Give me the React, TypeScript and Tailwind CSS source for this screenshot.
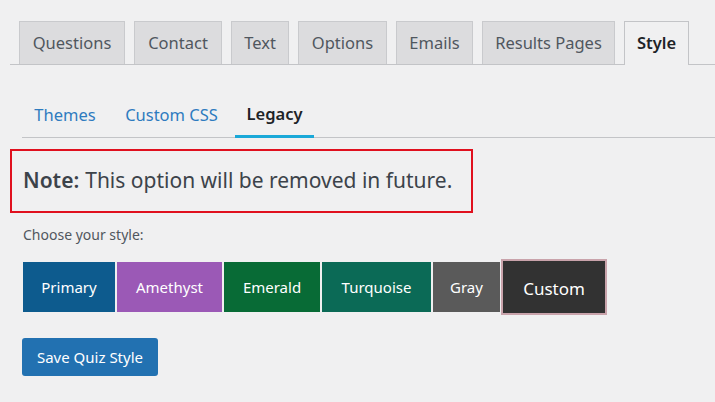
const tabs = [
  { label: 'Questions', w: 'w-[106px]' },
  { label: 'Contact', w: 'w-[88px]' },
  { label: 'Text', w: 'w-[58px]' },
  { label: 'Options', w: 'w-[89px]' },
  { label: 'Emails', w: 'w-[77px]' },
  { label: 'Results Pages', w: 'w-[133px]' },
]

const styles = [
  { label: 'Primary', cls: 'w-[92px] bg-[#0d5b8e]' },
  { label: 'Amethyst', cls: 'w-[105px] bg-[#9b59b6]' },
  { label: 'Emerald', cls: 'w-[96px] bg-[#086b36]' },
  { label: 'Turquoise', cls: 'w-[109px] bg-[#0b6a56]' },
  { label: 'Gray', cls: 'w-[67px] bg-[#5a5a5a]' },
]

export default function App() {
  return (
    <div
      className="w-[715px] h-[402px] overflow-hidden bg-[#f0f0f1] text-[#50575e]"
      style={{ fontFamily: '"Noto Sans", "Open Sans", sans-serif' }}
    >
      {/* main tabs */}
      <div className="ml-[10px] pt-[21px] pl-[9px] flex gap-[9px] border-b border-[#c3c4c7] h-[65px]">
        {tabs.map((t) => (
          <div
            key={t.label}
            className={`${t.w} h-[43px] flex items-center justify-center bg-[#dcdcde] border border-[#c9cacd] border-b-0 text-[16.5px] text-[#50575e]`}
          >
            {t.label}
          </div>
        ))}
        <div className="w-[65px] h-[44px] -mb-px flex items-center justify-center bg-[#f0f0f1] border border-[#c3c4c7] border-b-0 text-[16.5px] font-semibold text-[#1d2327]">
          Style
        </div>
      </div>

      {/* sub tabs */}
      <div className="ml-[22px] mt-[28px] flex gap-[4px] border-b border-[#c3c4c7] h-[45px]">
        <div className="w-[86px] flex items-center justify-center text-[16.5px] text-[#2e7bbf]">Themes</div>
        <div className="w-[119px] flex items-center justify-center text-[16.5px] text-[#2e7bbf]">Custom CSS</div>
        <div className="w-[79px] flex items-center justify-center text-[16.5px] font-semibold text-[#1d2327] border-b-[3px] border-[#1aa8d8] -mb-px">
          Legacy
        </div>
      </div>

      {/* note */}
      <div className="ml-[10px] mt-[11px] w-[463px] h-[64px] border-2 border-[#e0101e] flex items-center pl-[11px] text-[21px] text-[#3c434a]">
        <span className="font-semibold mr-[6px]">Note:</span>
        <span>This option will be removed in future.</span>
      </div>

      <div className="ml-[23px] mt-[11px] text-[14px] text-[#50575e]">Choose your style:</div>

      <div className="ml-[23px] mt-[14px] flex items-center gap-[2px]">
        {styles.map((s) => (
          <div
            key={s.label}
            className={`${s.cls} h-[50px] flex items-center justify-center text-[15px] text-white`}
          >
            {s.label}
          </div>
        ))}
        <div className="-ml-[1px] w-[106px] h-[56px] flex items-center justify-center pt-[3px] bg-[#323232] border-2 border-[#c9a3ab] text-[17px] text-white">
          Custom
        </div>
      </div>

      <button className="ml-[22px] mt-[23px] w-[136px] h-[38px] rounded-[3px] bg-[#2271b1] text-white text-[15px] flex items-center justify-center">
        Save Quiz Style
      </button>
    </div>
  )
}
